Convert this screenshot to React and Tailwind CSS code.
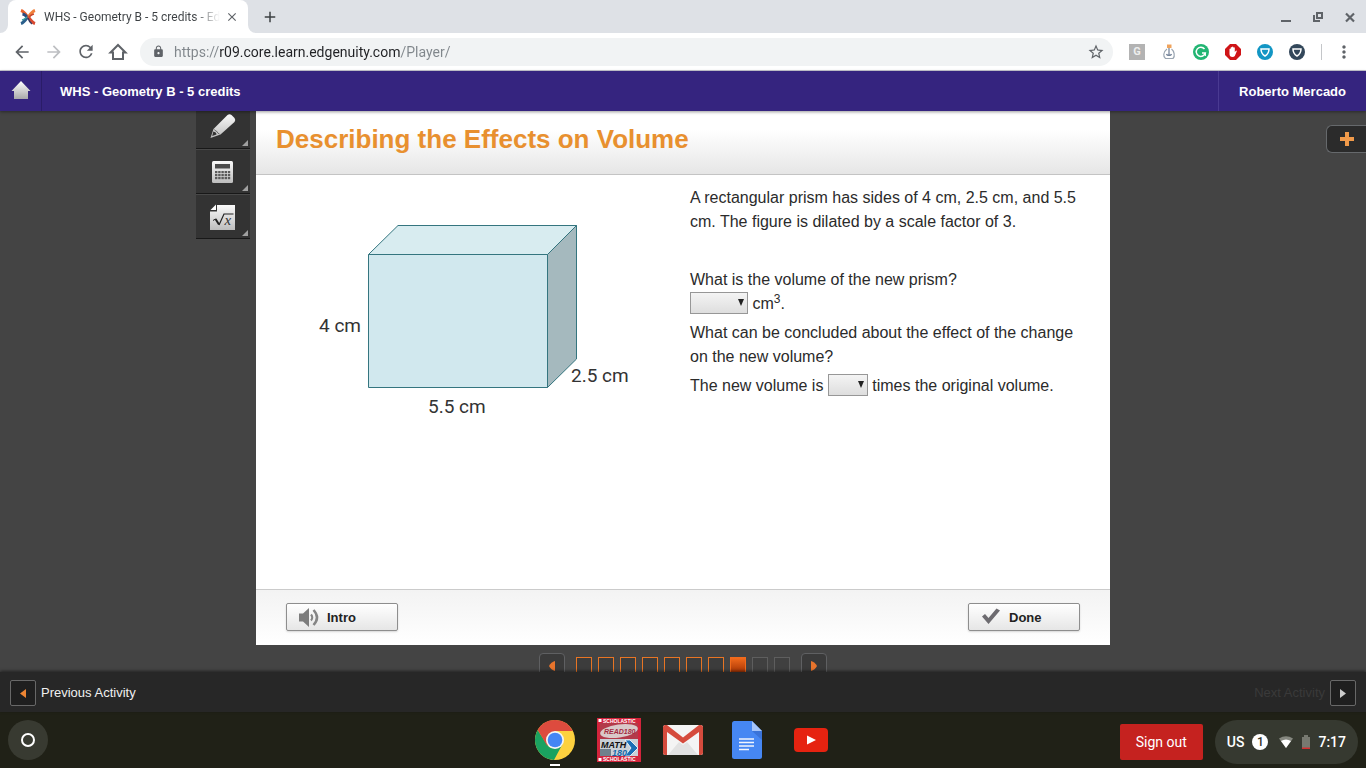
/**
 * App.jsx — Course player shown in a browser window, with the OS shelf underneath.
 */

import { useState } from 'react';
import { MdAdd, MdArrowBack, MdArrowForward, MdClose, MdLock, MdMoreVert, MdRefresh, MdStarBorder } from 'react-icons/md';

const FRAMES = ['done', 'done', 'done', 'done', 'done', 'done', 'done', 'current', 'locked', 'locked'];

const FRAME_STYLES = {
  done: 'border-[#e87524] bg-[#3c3c3c]',
  current: 'border-[#f06a1c] bg-linear-to-b from-[#f26a1b] to-[#a83606]',
  locked: 'border-[#5e5e5e] bg-[#404040]',
};

/* ---------- browser ---------- */

function Favicon() {
  return (
    <svg viewBox="0 0 16 16" className="size-4 shrink-0" fill="none" strokeWidth="3">
      <path d="M1 1.5 C4 2.5 5.500 5 7.500 8" stroke="#e8632c" />
      <path d="M2.500 5 C5 5.500 6 7 7.500 8" stroke="#2c4a7c" />
      <path d="M7.500 8 C5.500 11 4 13.500 1 14.500" stroke="#2b5f8c" />
      <path d="M7 8 C5 9.500 4 10.500 2 11" stroke="#3aa5a0" strokeWidth="1.5" />
      <path d="M15 1.500 C12 2.500 10.500 5 8.500 8" stroke="#f0803c" />
      <path d="M14 5 C11.500 5.500 10 7 8.500 8" stroke="#c9472d" strokeWidth="1.500" />
      <path d="M8.500 8 C10.500 11 12 13.500 15 14.500" stroke="#d9482e" />
      <path d="M8 9 C9 12 10 13.500 12 15" stroke="#3b3a5f" strokeWidth="1.500" />
    </svg>
  );
}

function TabStrip() {
  return (
    <div className="flex h-[33px] bg-[#dee1e6] text-[#5f6368]">
      <svg viewBox="0 0 8 8" className="size-2 self-end"><path d="M8 0v8H0a8 8 0 0 0 8-8z" fill="#fff" /></svg>
      <div className="flex w-60 items-center rounded-t-lg bg-white pl-3 pr-2">
        <Favicon />
        <span className="ml-2 flex-1 whitespace-nowrap bg-linear-to-r from-[#3c4043] from-85% to-transparent bg-clip-text text-[12px] text-transparent">
          WHS - Geometry B - 5 credits - Ed
        </span>
        <button aria-label="Close tab" className="ml-1 flex size-4 items-center justify-center">
          <MdClose size={14} />
        </button>
      </div>
      <svg viewBox="0 0 8 8" className="size-2 self-end"><path d="M0 0v8h8a8 8 0 0 1-8-8z" fill="#fff" /></svg>
      <button aria-label="New tab" className="ml-1 flex w-5 items-center justify-center text-[#3c4043]">
        <MdAdd size={18} />
      </button>
      <div className="ml-auto flex items-center gap-4 pr-2">
        <button aria-label="Minimize" className="flex size-4 items-center justify-center">
          <svg viewBox="0 0 16 16" className="size-4"><path d="M3 11h10v2H3z" fill="#5f6368" /></svg>
        </button>
        <button aria-label="Restore" className="flex size-4 items-center justify-center">
          <svg viewBox="0 0 16 16" className="size-4" fill="none" stroke="#5f6368" strokeWidth="2">
            <path d="M7 4h5v5H7z" />
            <path d="M4 6v6h6" />
          </svg>
        </button>
        <button aria-label="Close window" className="flex size-4 items-center justify-center">
          <svg viewBox="0 0 16 16" className="size-4" stroke="#5f6368" strokeWidth="2.200"><path d="M4 4.500l8 8M12 4.500l-8 8" /></svg>
        </button>
      </div>
    </div>
  );
}

function Shield({ fill }) {
  return (
    <svg viewBox="0 0 16 16" className="size-4">
      <circle cx="8" cy="8" r="8" fill={fill} />
      <path d="M4 5h8c0 3-1.800 5.700-4 7-2.200-1.300-4-4-4-7z" fill="none" stroke="#fff" strokeWidth="1.500" />
    </svg>
  );
}

const EXTENSIONS = [
  {
    label: 'Grade',
    icon: (
      <span className="flex size-4 items-center justify-center bg-[#b3b3b3] text-[11px] leading-4 font-bold text-[#eeeeee]">G</span>
    ),
  },
  {
    label: 'Reader',
    icon: (
      <svg viewBox="0 0 16 16" className="size-4" fill="none" stroke="#9aa5b1" strokeWidth="1.200">
        <path d="M6 .5h4.500v3.500H6z" fill="#efa35c" stroke="none" />
        <path d="M6 5C2 8 2 13 4.500 14.500h7.500C14.500 12 13 7 10.500 5" />
        <path d="M8 4v8M5.500 10c.5 2 4.500 2 5 0" stroke="#6f7f96" />
      </svg>
    ),
  },
  {
    label: 'Grammar',
    icon: (
      <svg viewBox="0 0 16 16" className="size-4">
        <circle cx="8" cy="8" r="8" fill="#22b573" />
        <path d="M11.500 5A4.600 4.600 0 1 0 12.300 9H9" fill="none" stroke="#fff" strokeWidth="1.500" />
        <path d="M12.300 9v3" stroke="#fff" strokeWidth="1.200" />
      </svg>
    ),
  },
  {
    label: 'Blocker',
    icon: (
      <svg viewBox="0 0 16 16" className="size-4">
        <path d="M5 0h6l5 5v6l-5 5H5l-5-5V5z" fill="#cf1417" />
        <path d="M4.500 8V5q.6-.8 1.200 0V3.500q.6-.8 1.300 0V3q.7-.8 1.400 0v.7q.7-.8 1.400 0V8l1-1.300q1-.4 1 .5L9.800 12q-.8 1-2.300 1-3 0-3-3z" fill="#fff" />
      </svg>
    ),
  },
  { label: 'Privacy', icon: <Shield fill="#1296c4" /> },
  { label: 'Security', icon: <Shield fill="#33475a" /> },
];

function Toolbar() {
  return (
    <div className="flex h-[38px] items-center border-b border-[#c9c9d2] bg-white text-[#5f6368]">
      <div className="flex gap-3 pl-3">
        <button aria-label="Back" className="flex size-5 items-center justify-center"><MdArrowBack size={20} /></button>
        <button aria-label="Forward" className="flex size-5 items-center justify-center text-[#bdbfc2]" disabled><MdArrowForward size={20} /></button>
        <button aria-label="Reload" className="flex size-5 items-center justify-center"><MdRefresh size={21} /></button>
        <button aria-label="Home" className="flex size-5 items-center justify-center">
          <svg viewBox="0 0 20 20" className="size-5" fill="none" stroke="#5f6368" strokeWidth="2">
            <path d="M2.500 10.500h2.500V17h10v-6.500h2.500L10 3z" strokeLinejoin="miter" />
          </svg>
        </button>
      </div>
      <div className="ml-3 flex h-7 flex-1 items-center rounded-full bg-[#f1f3f4] pl-3 pr-2">
        <MdLock size={13} className="shrink-0" />
        <input
          aria-label="Address"
          defaultValue="https://r09.core.learn.edgenuity.com/Player/"
          className="ml-2 min-w-0 flex-1 bg-[linear-gradient(90deg,#80868b_46px,#202124_46px,#202124_228px,#80868b_228px)] bg-clip-text pl-px pt-0.5 text-[14px] text-transparent outline-none"
        />
        <button aria-label="Bookmark"><MdStarBorder size={18} /></button>
      </div>
      <div className="ml-4 flex items-center gap-4">
        {EXTENSIONS.map(({ label, icon }) => (
          <button key={label} aria-label={label}>{icon}</button>
        ))}
      </div>
      <span className="ml-4 h-4 w-px bg-[#c4c6c9]" />
      <button aria-label="Menu" className="ml-3 mr-3"><MdMoreVert size={20} /></button>
    </div>
  );
}

/* ---------- course player ---------- */

function CourseHeader() {
  return (
    <header className="z-10 flex h-10 bg-[#35247f] font-['Liberation_Sans',Arial,sans-serif] text-[13px] font-bold text-white shadow-[0_1px_3px_rgba(0,0,0,0.4)]">
      <a href="#home" aria-label="Home" className="flex w-[42px] items-center justify-center border-r border-[#2a1c68]">
        <svg viewBox="0 0 20 20" className="size-5">
          <defs>
            <linearGradient id="home-fill" x1="0" y1="0" x2="0" y2="1">
              <stop offset="0" stopColor="#fff" />
              <stop offset="1" stopColor="#a9a9a9" />
            </linearGradient>
          </defs>
          <path d="M10 0l9.500 10H17v8H3v-8H.5z" fill="url(#home-fill)" />
        </svg>
      </a>
      <h1 className="flex flex-1 items-center pl-[18px] pt-0.5">WHS - Geometry B - 5 credits</h1>
      <div className="flex items-center border-l border-[#4a3a92] px-5 pt-0.5">Roberto Mercado</div>
    </header>
  );
}

function ToolDefs() {
  return (
    <defs>
      <linearGradient id="tool-fill" x1="0" y1="0" x2="0" y2="1">
        <stop offset="0" stopColor="#fafafa" />
        <stop offset="1" stopColor="#bdbdbd" />
      </linearGradient>
    </defs>
  );
}

const TOOLS = [
  {
    label: 'Highlighter',
    icon: (
      <svg viewBox="0 0 26 26" className="size-[26px]">
        <ToolDefs />
        <path d="M.5 25L3.500 16 17.500 2q2-1.500 4 0l3 3q1.500 2 0 4L10.500 21.500z" fill="url(#tool-fill)" />
        <path d="M3.300 18.500L2.200 23l4.300-1.500q0-2.500-3.200-3z" fill="#333" />
        <path d="M4.500 16.500q1 2 2.500 2 .5 2 2.500 2.500" stroke="#555" strokeWidth=".8" fill="none" />
      </svg>
    ),
  },
  {
    label: 'Calculator',
    icon: (
      <svg viewBox="0 0 26 26" className="size-[26px]">
        <rect x="2" y="2" width="21" height="22" rx="1.500" fill="url(#tool-fill)" />
        <rect x="5" y="5" width="15" height="4.500" fill="#4b4b4b" />
        {[12, 15, 18].map((y) => [5, 8.2, 11.4, 14.6, 17.8].map((x) => (
          <rect key={x + '-' + y} x={x} y={y} width="2.400" height="2.200" fill="#5a5a5a" />
        )))}
      </svg>
    ),
  },
  {
    label: 'Equation editor',
    icon: (
      <svg viewBox="0 0 26 26" className="size-[26px]">
        <path d="M7 1h18v25H0V7.500h7z" fill="url(#tool-fill)" />
        <path d="M.5 6L6 .5V6z" fill="#fff" />
        <path d="M3 16.500l2.500-1.500" fill="none" stroke="#222" />
        <path d="M5.500 15l3.500 5.500" fill="none" stroke="#222" strokeWidth="2" />
        <path d="M9 21l5-11h9.500" fill="none" stroke="#222" strokeWidth="1.200" />
        <text x="14.500" y="20.500" fontFamily="Liberation Serif, serif" fontSize="15" fontStyle="italic" fill="#333">x</text>
      </svg>
    ),
  },
];

function ToolColumn() {
  return (
    <div className="flex w-[54px] flex-col">
      {TOOLS.map(({ label, icon }, i) => (
        <button
          key={label}
          aria-label={label}
          className={[
            'relative flex items-center justify-center border-b border-[#181818] bg-[#333333]',
            i === 0 ? 'h-[38px] pb-2' : 'h-[45px] border-t border-t-[#484848]',
          ].join(' ')}
        >
          {icon}
          <svg viewBox="0 0 6 6" className="absolute bottom-0.5 right-0.5 size-1.5"><path d="M6 0v6H0z" fill="#a0a0a0" /></svg>
        </button>
      ))}
    </div>
  );
}

function Prism() {
  return (
    <svg
      viewBox="0 0 320 200"
      className="h-[200px] w-[320px]"
      role="img"
      aria-label="Rectangular prism, 5.5 cm by 2.5 cm by 4 cm"
      fontFamily="Roboto, sans-serif"
      fontSize="19"
    >
      <g stroke="#34757f" strokeLinejoin="round">
        <path d="M52.500 34.500L82 5.500h178.500l-29 29z" fill="#d8ecf0" />
        <path d="M231.500 34.500l29-29v133.500l-29 28.500z" fill="#a5b9be" />
        <path d="M52.500 34.500h179v133h-179z" fill="#d1e8ee" />
      </g>
      <g fill="#333">
        <text x="3" y="112">4 cm</text>
        <text x="112" y="193">5.5 cm</text>
        <text x="255" y="162">2.5 cm</text>
      </g>
    </svg>
  );
}

function AnswerSelect({ label, options, wide }) {
  const [value, setValue] = useState('');
  return (
    <span className={['relative inline-block h-[22px] align-top', wide ? 'w-[58px]' : 'w-10'].join(' ')}>
      <select
        aria-label={label}
        value={value}
        onChange={(e) => setValue(e.target.value)}
        className="block size-full appearance-none border border-[#979797] bg-linear-to-b from-[#f4f4f4] to-[#dedede] pl-1 text-[13px]"
      >
        <option value="" />
        {options.map((o) => <option key={o}>{o}</option>)}
      </select>
      <svg viewBox="0 0 6 7" className="pointer-events-none absolute right-1 top-[7px] h-[7px] w-1.5"><path d="M0 0h6L3 7z" fill="#222" /></svg>
    </span>
  );
}

function Question() {
  return (
    <div className="text-[16px] leading-6 text-[#2b2b2b]">
      <p>A rectangular prism has sides of 4 cm, 2.5 cm, and 5.5 cm. The figure is dilated by a scale factor of 3.</p>
      <p className="mt-[34px]">What is the volume of the new prism?</p>
      <p className="h-6">
        <AnswerSelect label="Volume of the new prism" options={['55', '165', '495', '1,485']} wide /> cm<sup className="text-[12px]">3</sup>.
      </p>
      <p className="mt-[5px]">What can be concluded about the effect of the change on the new volume?</p>
      <p className="mt-[5px]">
        The new volume is <AnswerSelect label="Scale of the new volume" options={['3', '9', '27']} /> times the original volume.
      </p>
    </div>
  );
}

function ActionButton({ children, icon }) {
  return (
    <button className="flex h-7 min-w-28 items-center gap-2 rounded-xs border border-[#8e8e8e] bg-linear-to-b from-white to-[#e6e6e6] px-3 pt-0.5 text-[13px] font-bold text-[#222] shadow-[0_1px_2px_rgba(0,0,0,0.15)]">
      {icon}
      {children}
    </button>
  );
}

function SpeakerIcon() {
  return (
    <svg viewBox="0 0 20 20" className="size-5" fill="none" stroke="#858585" strokeWidth="2">
      <path d="M0 5.500h4L10 0v19l-6-5.500H0z" fill="#7c7c7c" stroke="none" />
      <path d="M12 6.500q2.500 3 0 6" />
      <path d="M14.500 2q7 7.500 0 15" strokeWidth="2.500" />
    </svg>
  );
}

function CheckIcon() {
  return (
    <svg viewBox="0 0 20 20" className="size-5">
      <path d="M1 8.500l3-2.500 3.500 4L15.500.5l3.500 2L7.500 16z" fill="#6d6b70" />
    </svg>
  );
}

function Slide() {
  return (
    <article className="flex min-w-0 flex-col bg-white">
      <div className="flex h-16 items-center border-b border-[#c4c4c4] bg-linear-to-b from-white from-30% to-[#e6e6e6] px-5 pb-1.5">
        <h2 className="text-[26px] font-bold text-[#e8902f]">Describing the Effects on Volume</h2>
      </div>
      <div className="grid flex-1 grid-cols-[434fr_420fr]">
        <div className="pl-[60px] pt-[45px]"><Prism /></div>
        <div className="pr-6 pt-[11px]"><Question /></div>
      </div>
      <div className="flex h-14 items-center justify-between border-t border-[#cbcbcb] bg-linear-to-b from-[#f3f3f3] to-white px-[30px] pb-0.5">
        <ActionButton icon={<SpeakerIcon />}>Intro</ActionButton>
        <ActionButton icon={<CheckIcon />}>Done</ActionButton>
      </div>
    </article>
  );
}

function PagerButton({ label, path }) {
  return (
    <button aria-label={label} className="-mt-1 flex h-[26px] w-[26px] shrink-0 items-center justify-center rounded border border-[#5f6062] bg-[#3a3a3a]">
      <svg viewBox="0 0 8 10" className="h-2.5 w-2"><path d={path} fill="#e8742c" /></svg>
    </button>
  );
}

function FramePager() {
  return (
    <nav aria-label="Frames" className="flex h-[27px] items-start justify-center gap-[11px] overflow-hidden pt-3">
      <PagerButton label="Previous frame" path="M7 0v10Q3 9 1 5 3 1 7 0z" />
      <div className="flex gap-1.5">
        {FRAMES.map((state, i) => (
          <button key={i} aria-label={'Frame ' + (i + 1)} className={['size-4 border', FRAME_STYLES[state]].join(' ')} />
        ))}
      </div>
      <PagerButton label="Next frame" path="M1 0v10q4-1 6-5-2-4-6-5z" />
    </nav>
  );
}

function ActivityBar() {
  return (
    <div className="z-10 flex h-10 items-center justify-between bg-[#272727] px-2.5 pt-0.5 text-[13px] shadow-[0_-1px_3px_rgba(0,0,0,0.5)]">
      <button className="flex items-center gap-[5px] text-[#f0f0f0]">
        <span className="flex size-[26px] items-center justify-center rounded-xs border border-[#686868] bg-[#1f1f1f]">
          <svg viewBox="0 0 6 9" className="h-[9px] w-1.5"><path d="M6 0v9L0 4.500z" fill="#ee8533" /></svg>
        </span>
        Previous Activity
      </button>
      <button className="flex items-center gap-[5px] text-[#3a3a3a]" disabled>
        Next Activity
        <span className="flex size-[26px] items-center justify-center rounded-xs border border-[#686868] bg-[#1f1f1f]">
          <svg viewBox="0 0 6 9" className="h-[9px] w-1.5"><path d="M0 0v9l6-4.500z" fill="#cccccc" /></svg>
        </span>
      </button>
    </div>
  );
}

/* ---------- shelf ---------- */

function ChromeLogo() {
  return (
    <svg viewBox="0 0 40 40" className="size-10">
      <circle cx="20" cy="20" r="20" fill="#fdd13f" />
      <path d="M20 20L2.700 10A20 20 0 0 1 37.800 11H20z" fill="#dd4b3e" />
      <path d="M2.700 10l9.600 15 3 3 12-3.500L19 40A20 20 0 0 1 2.700 10z" fill="#1aa260" />
      <path d="M2.700 10L12 25.500 20 20V11z" fill="#dd4b3e" />
      <circle cx="20" cy="20" r="9" fill="#f4f4f4" />
      <circle cx="20" cy="20" r="7.300" fill="#4486f4" />
    </svg>
  );
}

function MathLogo() {
  return (
    <svg viewBox="0 0 44 44" className="size-11" fontFamily="Liberation Sans, sans-serif" fontWeight="bold">
      <path d="M0 0h44v44H0z" fill="#d3243c" />
      <path d="M3 5h38v16H3z" fill="#b33a4a" />
      <ellipse cx="22" cy="13" rx="19" ry="6.500" fill="#d9c9c9" transform="rotate(-8 22 13)" />
      <path d="M3 21h38v17H3z" fill="#c9d0d6" />
      <path d="M3 31h11v7H3z" fill="#70808c" />
      <path d="M28 22h5l8 8-8 8h-5l6-8z" fill="#1b6fb5" stroke="#fff" strokeWidth=".8" />
      <g fill="#fff" fontSize="5">
        <path d="M1.500 1h3v3h-3zM1.500 40h3v3h-3z" />
        <text x="6" y="4.500">SCHOLASTIC</text>
        <text x="6" y="43.200">SCHOLASTIC</text>
      </g>
      <text x="7" y="16" fontSize="7" fontStyle="italic" fill="#a32a40">READ180</text>
      <text x="4" y="30" fontSize="9" fontStyle="italic" fill="#111">MATH</text>
      <text x="15" y="38" fontSize="9" fontStyle="italic" fill="#1668aa">180</text>
    </svg>
  );
}

function GmailLogo() {
  return (
    <svg viewBox="0 0 40 30" className="h-[30px] w-10">
      <rect width="40" height="30" rx="2.500" fill="#f4f4f4" />
      <path d="M5 30L16 17l4 3 4-3 11 13z" fill="#e2e2e2" />
      <path d="M0 2.500Q0 0 2.500 0H4l16 12.500L36 0h1.500Q40 0 40 2.500v25q0 2.500-2.500 2.500H36V7L20 18.500 4 7v23H2.500Q0 30 0 27.500z" fill="#d54b3d" />
    </svg>
  );
}

function DocsLogo() {
  return (
    <svg viewBox="0 0 30 38" className="h-[38px] w-[30px]">
      <path d="M2.500 0H20l10 10v25.500q0 2.500-2.500 2.500h-25Q0 38 0 35.500v-33Q0 0 2.500 0z" fill="#4687f3" />
      <path d="M20 0l10 10H20z" fill="#a6c5fa" />
      <path d="M20 10h10v9z" fill="#3a73d8" />
      <path d="M7 18h15M7 21.500h15M7 25h15M7 28.500h10" stroke="#f1f5fd" strokeWidth="1.500" />
    </svg>
  );
}

function YoutubeLogo() {
  return (
    <svg viewBox="0 0 34 24" className="h-6 w-[34px]">
      <rect width="34" height="24" rx="4" fill="#e62310" />
      <path d="M13 7.500v9l9-4.500z" fill="#fff" />
    </svg>
  );
}

const APPS = [
  { label: 'Chrome', icon: <ChromeLogo />, running: true },
  { label: 'Read 180 and Math 180', icon: <MathLogo /> },
  { label: 'Gmail', icon: <GmailLogo /> },
  { label: 'Docs', icon: <DocsLogo /> },
  { label: 'YouTube', icon: <YoutubeLogo /> },
];

function Shelf() {
  return (
    <footer className="grid h-14 grid-cols-[1fr_auto_1fr] items-center bg-[#202117]">
      <button aria-label="Launcher" className="ml-2 flex size-10 items-center justify-center rounded-full bg-[#383a31]">
        <span className="size-3.5 rounded-full border-2 border-white" />
      </button>
      <div className="flex gap-5">
        {APPS.map(({ label, icon, running }) => (
          <button key={label} aria-label={label} className="relative flex h-14 w-11 items-center justify-center">
            {icon}
            {running && <span className="absolute bottom-0.5 h-0.5 w-2.5 bg-white" />}
          </button>
        ))}
      </div>
      <div className="flex items-center justify-end gap-3 pr-2 pt-1 text-[14px] text-white">
        <button className="h-9 rounded-xs bg-[#c5221f] px-4">Sign out</button>
        <button className="flex h-11 items-center gap-2 rounded-full bg-[#363930] px-3 font-medium">
          <span>US</span>
          <span className="flex size-4 items-center justify-center rounded-full bg-white text-[12px] text-[#303228]">1</span>
          <svg viewBox="0 0 16 12" className="ml-0.5 h-3 w-4">
            <path d="M1 2.500Q8-2 15 2.500L8 12z" fill="#85877f" />
            <path d="M3 5q5-3 10 0l-5 7z" fill="#fff" />
          </svg>
          <svg viewBox="0 0 8 14" className="h-3.5 w-2">
            <path d="M2 0h4v2h2v12H0V2h2z" fill="#777970" />
            <path d="M0 12.500h8V14H0z" fill="#d32f2f" />
          </svg>
          <span>7:17</span>
        </button>
      </div>
    </footer>
  );
}

export default function App() {
  return (
    <div className="flex min-h-screen flex-col font-[Roboto,sans-serif]">
      <TabStrip />
      <Toolbar />
      <CourseHeader />
      <div className="flex flex-1 flex-col bg-[#444444] font-['Liberation_Sans',Arial,sans-serif]">
        <main className="grid flex-1 grid-cols-[1fr_minmax(0,854px)_1fr]">
          <div className="flex items-start justify-end pr-1.5"><ToolColumn /></div>
          <Slide />
          <div className="flex items-start justify-end pt-3.5">
            <button aria-label="Open notes" className="flex h-7 w-10 items-center justify-center rounded-l-md border border-r-0 border-[#66696c] bg-[#2b2b2b]">
              <svg viewBox="0 0 14 14" className="size-3.5"><path d="M5 0h4v5h5v4H9v5H5V9H0V5h5z" fill="#f09a4a" /></svg>
            </button>
          </div>
        </main>
        <FramePager />
        <ActivityBar />
      </div>
      <Shelf />
    </div>
  );
}
